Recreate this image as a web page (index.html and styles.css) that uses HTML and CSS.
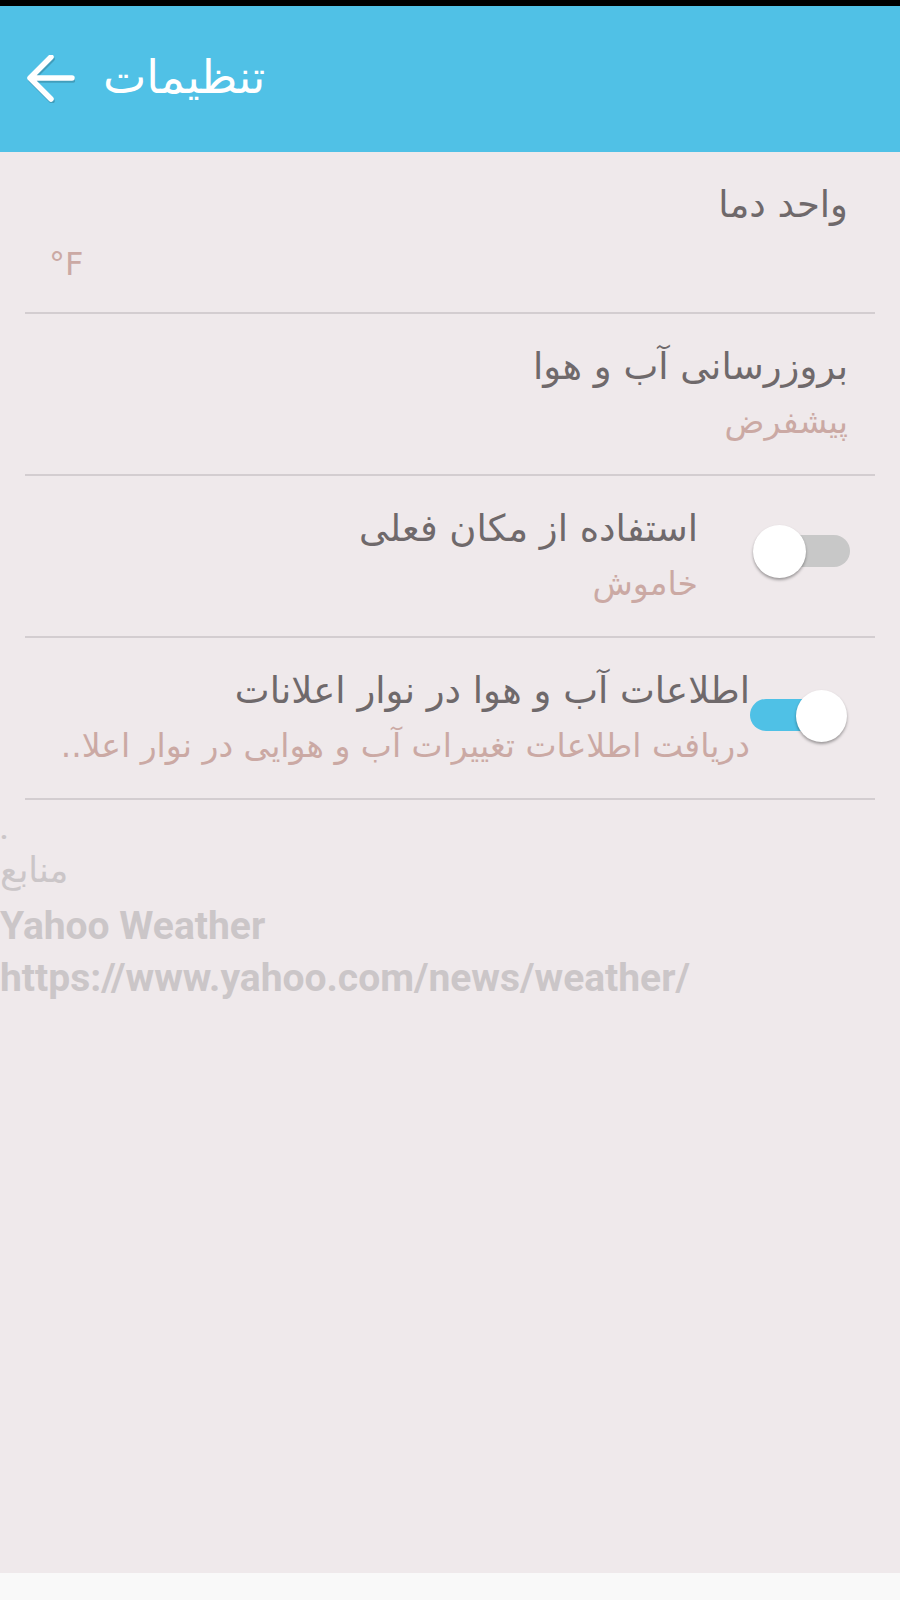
FILE: index.html
```html
<!DOCTYPE html>
<html lang="fa">
<head>
<meta charset="utf-8">
<title>تنظیمات</title>
<link rel="stylesheet" href="styles.css">
</head>
<body>
<div class="screen">
  <div class="statusbar"></div>
  <header class="appbar">
    <svg class="back" viewBox="0 0 48 48" width="48" height="48" aria-hidden="true">
      <g fill="none" stroke="#000" stroke-opacity="0.18" stroke-width="5.5" stroke-linecap="round" stroke-linejoin="round" transform="translate(1,2)">
        <path d="M45 23H4M24 2L3 23l21 21"/>
      </g>
      <g fill="none" stroke="#fff" stroke-width="5.5" stroke-linecap="round" stroke-linejoin="round">
        <path d="M45 23H4M24 2L3 23l21 21"/>
      </g>
    </svg>
    <h1 class="title">تنظیمات</h1>
  </header>

  <main class="list">
    <div class="row">
      <div class="text">
        <div class="row-title">واحد دما</div>
        <div class="row-sub ltr">°F</div>
      </div>
    </div>
    <div class="row">
      <div class="text">
        <div class="row-title">بروزرسانی آب و هوا</div>
        <div class="row-sub">پیشفرض</div>
      </div>
    </div>
    <div class="row row-switch">
      <div class="switch-wrap wrap-off">
        <div class="switch off">
          <span class="track"></span>
          <span class="thumb"></span>
        </div>
      </div>
      <div class="text">
        <div class="row-title">استفاده از مکان فعلی</div>
        <div class="row-sub">خاموش</div>
      </div>
    </div>
    <div class="row row-switch">
      <div class="switch-wrap wrap-on">
        <div class="switch on">
          <span class="track"></span>
          <span class="thumb"></span>
        </div>
      </div>
      <div class="text">
        <div class="row-title">اطلاعات آب و هوا در نوار اعلانات</div>
        <div class="row-sub">دریافت اطلاعات تغییرات آب و هوایی در نوار اعلا..</div>
      </div>
    </div>
  </main>

  <section class="sources">
    <div class="dot">.</div>
    <div class="src-ar">منابع</div>
    <div>Yahoo Weather</div>
    <div>https://www.yahoo.com/news/weather/</div>
  </section>

  <div class="navbar"></div>
</div>
</body>
</html>
```

FILE: styles.css
```css
* { box-sizing: border-box; }

html, body {
  margin: 0;
  padding: 0;
  background: #efe9eb;
}

.screen {
  width: 900px;
  height: 1600px;
  display: flex;
  flex-direction: column;
  background: #efe9eb;
  font-family: "DejaVu Sans", "Noto Sans", sans-serif;
  overflow: hidden;
}

.statusbar {
  height: 6px;
  background: #000;
  flex: none;
}

.appbar {
  height: 146px;
  flex: none;
  background: #50c1e6;
  display: flex;
  align-items: center;
  direction: ltr;
  padding-left: 27px;
}

.back {
  display: block;
  width: 48px;
  height: 48px;
}

.title {
  margin: 0 0 4px 28px;
  font-weight: normal;
  font-size: 46px;
  color: #fff;
  direction: rtl;
}

.list {
  padding: 0 25px;
  flex: none;
}

.row {
  height: 162px;
  border-bottom: 2px solid #d3cdd0;
  direction: rtl;
  display: flex;
  align-items: flex-start;
  padding-right: 27px;
}

.row-switch {
  padding-right: 0;
}

.text {
  padding-top: 28px;
  text-align: right;
}

.row-title {
  font-size: 37px;
  line-height: 50px;
  color: #6f696b;
}

.row-sub {
  font-size: 33px;
  line-height: 46px;
  margin-top: 7px;
  color: #cba9a4;
}

.row:first-child .text {
  flex: 1;
}

.row-sub.ltr {
  direction: ltr;
  text-align: left;
  padding-left: 24px;
  margin-top: 11px;
  font-size: 32px;
}

.switch-wrap {
  flex: none;
  display: flex;
  justify-content: flex-start;
}

.wrap-off {
  width: 152px;
  margin-right: 25px;
  padding-top: 49px;
}

.wrap-on {
  width: 97px;
  margin-right: 28px;
  margin-top: 52px;
}

.switch {
  position: relative;
  height: 53px;
  direction: ltr;
}

.switch.off { width: 97px; }
.switch.on { width: 97px; }

.track {
  position: absolute;
  top: 10px;
  height: 32px;
  width: 86px;
  border-radius: 16px;
}

.off .track {
  right: 0;
  background: #c8c8c8;
}

.on .track {
  left: 0;
  background: #4fc1e6;
  top: 9px;
}

.thumb {
  position: absolute;
  top: 0;
  width: 53px;
  height: 53px;
  border-radius: 50%;
  background: #fff;
  box-shadow: 0 2px 3px rgba(0, 0, 0, 0.35);
}

.off .thumb { left: 0; }
.on .thumb { right: 0; width: 51px; height: 52px; }

.sources {
  padding-top: 20px;
  font-family: "Roboto", "DejaVu Sans", sans-serif;
  font-weight: bold;
  font-size: 39px;
  line-height: 52px;
  color: #cbc6c8;
  direction: ltr;
  text-align: left;
  flex: 1;
}

.sources .dot {
  line-height: 20px;
  height: 20px;
  font-size: 28px;
}

.sources .src-ar {
  font-family: "DejaVu Sans", sans-serif;
  font-weight: normal;
  font-size: 35px;
  line-height: 60px;
  direction: rtl;
  text-align: left;
  display: inline-block;
}

.navbar {
  height: 27px;
  flex: none;
  background: #f9f9f9;
}
```
